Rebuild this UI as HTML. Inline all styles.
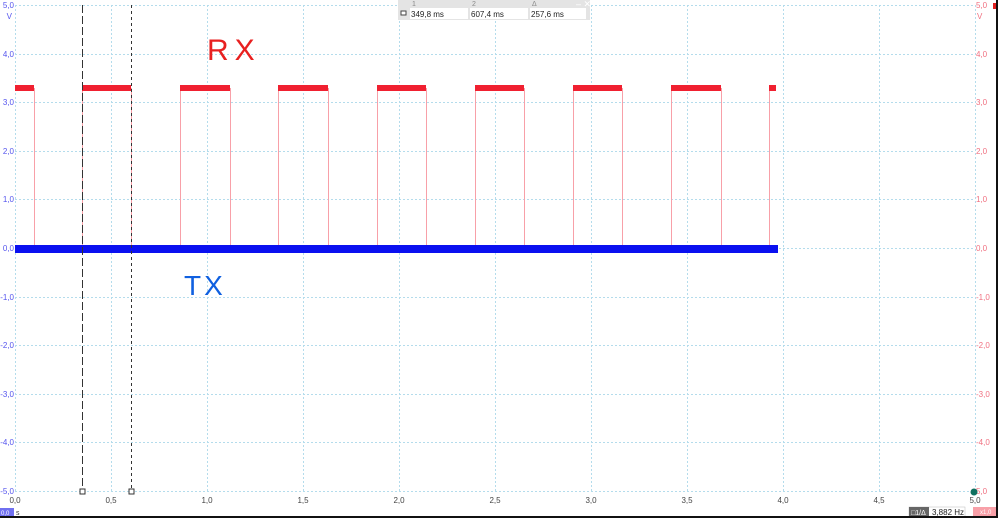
<!DOCTYPE html>
<html><head><meta charset="utf-8"><style>
html,body{margin:0;padding:0;background:#fff;width:998px;height:518px;overflow:hidden}
svg{display:block}
text{font-family:"Liberation Sans",sans-serif}
</style></head><body>
<svg width="998" height="518" viewBox="0 0 998 518" xmlns="http://www.w3.org/2000/svg">
<g stroke="#b4dcec" stroke-width="1" stroke-dasharray="2,2">
<line x1="15" y1="5.5" x2="975" y2="5.5"/><line x1="15" y1="54.5" x2="975" y2="54.5"/><line x1="15" y1="102.5" x2="975" y2="102.5"/><line x1="15" y1="151.5" x2="975" y2="151.5"/><line x1="15" y1="199.5" x2="975" y2="199.5"/><line x1="15" y1="248.5" x2="975" y2="248.5"/><line x1="15" y1="297.5" x2="975" y2="297.5"/><line x1="15" y1="345.5" x2="975" y2="345.5"/><line x1="15" y1="394.5" x2="975" y2="394.5"/><line x1="15" y1="442.5" x2="975" y2="442.5"/><line x1="15" y1="491.5" x2="975" y2="491.5"/>
<line x1="15.5" y1="5" x2="15.5" y2="491"/><line x1="111.5" y1="5" x2="111.5" y2="491"/><line x1="207.5" y1="5" x2="207.5" y2="491"/><line x1="303.5" y1="5" x2="303.5" y2="491"/><line x1="399.5" y1="5" x2="399.5" y2="491"/><line x1="495.5" y1="5" x2="495.5" y2="491"/><line x1="591.5" y1="5" x2="591.5" y2="491"/><line x1="687.5" y1="5" x2="687.5" y2="491"/><line x1="783.5" y1="5" x2="783.5" y2="491"/><line x1="879.5" y1="5" x2="879.5" y2="491"/><line x1="975.5" y1="5" x2="975.5" y2="491"/>
</g>
<g font-size="8" fill="#5555ee" text-anchor="end">
<text x="14" y="8">5,0</text><text x="12" y="19">V</text><text x="14" y="57">4,0</text><text x="14" y="105">3,0</text><text x="14" y="154">2,0</text><text x="14" y="202">1,0</text><text x="14" y="251">0,0</text><text x="14" y="300">-1,0</text><text x="14" y="348">-2,0</text><text x="14" y="397">-3,0</text><text x="14" y="445">-4,0</text><text x="14" y="494">-5,0</text>
</g>
<g font-size="8" fill="#f07080">
<text x="976" y="8">5,0</text><text x="977" y="19">V</text><text x="976" y="57">4,0</text><text x="976" y="105">3,0</text><text x="976" y="154">2,0</text><text x="976" y="202">1,0</text><text x="976" y="251">0,0</text><text x="976" y="300">-1,0</text><text x="976" y="348">-2,0</text><text x="976" y="397">-3,0</text><text x="976" y="445">-4,0</text><text x="976" y="494">5,0</text>
</g>
<rect x="993" y="3" width="5" height="6" fill="#e02020"/>
<g font-size="8" fill="#444" text-anchor="middle">
<text x="15" y="503">0,0</text><text x="111" y="503">0,5</text><text x="207" y="503">1,0</text><text x="303" y="503">1,5</text><text x="399" y="503">2,0</text><text x="495" y="503">2,5</text><text x="591" y="503">3,0</text><text x="687" y="503">3,5</text><text x="783" y="503">4,0</text><text x="879" y="503">4,5</text><text x="975" y="503">5,0</text>
</g>
<g stroke="#f8a0a8" stroke-width="1">
<line x1="34.5" y1="88" x2="34.5" y2="249"/><line x1="82.5" y1="88" x2="82.5" y2="249"/><line x1="131.5" y1="88" x2="131.5" y2="249"/><line x1="180.5" y1="88" x2="180.5" y2="249"/><line x1="230.5" y1="88" x2="230.5" y2="249"/><line x1="278.5" y1="88" x2="278.5" y2="249"/><line x1="328.5" y1="88" x2="328.5" y2="249"/><line x1="377.5" y1="88" x2="377.5" y2="249"/><line x1="426.5" y1="88" x2="426.5" y2="249"/><line x1="475.5" y1="88" x2="475.5" y2="249"/><line x1="524.5" y1="88" x2="524.5" y2="249"/><line x1="573.5" y1="88" x2="573.5" y2="249"/><line x1="622.5" y1="88" x2="622.5" y2="249"/><line x1="671.5" y1="88" x2="671.5" y2="249"/><line x1="721.5" y1="88" x2="721.5" y2="249"/><line x1="769.5" y1="88" x2="769.5" y2="249"/>
</g>
<g fill="#f02030">
<rect x="15" y="85" width="19" height="6"/><rect x="82" y="85" width="49" height="6"/><rect x="180" y="85" width="50" height="6"/><rect x="278" y="85" width="50" height="6"/><rect x="377" y="85" width="49" height="6"/><rect x="475" y="85" width="49" height="6"/><rect x="573" y="85" width="49" height="6"/><rect x="671" y="85" width="50" height="6"/><rect x="769" y="85" width="7" height="6"/>
</g>
<rect x="15" y="245" width="763" height="8" fill="#0a10f0"/>
<line x1="82.5" y1="5" x2="82.5" y2="490" stroke="#333" stroke-dasharray="8,3"/>
<line x1="131.5" y1="5" x2="131.5" y2="490" stroke="#333" stroke-dasharray="3,3"/>
<rect x="80" y="489" width="5" height="5" fill="#fff" stroke="#333"/>
<rect x="129" y="489" width="5" height="5" fill="#fff" stroke="#333"/>
<circle cx="974" cy="492" r="3.5" fill="#107060"/>
<text x="207" y="60" font-size="30" fill="#e82020" letter-spacing="6">RX</text>
<text x="184" y="295" font-size="28" fill="#1060e0" letter-spacing="3">TX</text>
<rect x="398" y="0" width="192" height="20" fill="#e4e4e4"/>
<g font-size="7" fill="#888"><text x="412" y="6">1</text><text x="472" y="6">2</text><text x="532" y="6">Δ</text><text x="576" y="7" font-size="9" fill="#fff">‒ ✕</text></g>
<rect x="410" y="8" width="58" height="11" fill="#fff"/><rect x="470" y="8" width="58" height="11" fill="#fff"/><rect x="530" y="8" width="56" height="11" fill="#fff"/>
<rect x="401" y="11" width="5" height="4" fill="#fff" stroke="#444"/>
<g font-size="8" fill="#222"><text x="411" y="17">349,8 ms</text><text x="471" y="17">607,4 ms</text><text x="531" y="17">257,6 ms</text></g>
<rect x="0" y="508" width="14" height="8" fill="#7070f0"/><text x="1" y="515" font-size="6" fill="#fff">0,0</text><text x="16" y="515" font-size="7" fill="#333">s</text>
<rect x="909" y="507" width="56" height="10" fill="#fff" stroke="#bbb" stroke-width="0.5"/>
<rect x="909" y="507" width="20" height="10" fill="#666"/><text x="911" y="515" font-size="7" fill="#fff">□1/Δ</text>
<text x="932" y="515" font-size="8" fill="#222">3,882 Hz</text>
<rect x="973" y="507" width="23" height="9" fill="#f8a0a8"/><text x="980" y="514" font-size="6" fill="#fff">x1,0</text>
<line x1="0" y1="517" x2="998" y2="517" stroke="#111" stroke-width="2"/>
<line x1="997" y1="0" x2="997" y2="518" stroke="#111" stroke-width="2"/>
</svg>
</body></html>
